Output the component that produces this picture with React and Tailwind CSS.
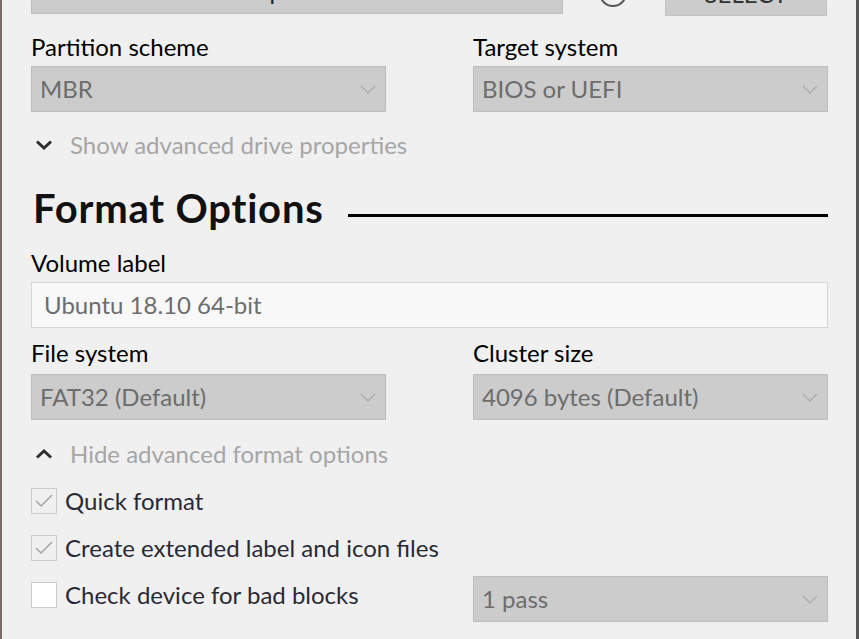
import React from 'react';

const font = { fontFamily: 'Lato, "Noto Sans", sans-serif' };

function ThinChevron() {
    return (
        <svg width="16" height="9" viewBox="0 0 16 9" className="shrink-0">
            <polyline points="1,1 8,8 15,1" fill="none" stroke="#a9a9a9" strokeWidth="1.2" />
        </svg>
    );
}

function Combo({ value, className = '' }) {
    return (
        <div className={`flex h-[46px] items-center justify-between border border-[#bdbdbd] bg-[#cccccc] pl-[8px] pr-[9px] ${className}`}>
            <span className="text-[24px] leading-[30px] text-[#6d6d6d]">{value}</span>
            <ThinChevron />
        </div>
    );
}

function Label({ children }) {
    return <div className="h-[30px] text-[24px] leading-[30px] text-black">{children}</div>;
}

function Toggle({ up, children }) {
    return (
        <div className="flex h-[30px] items-center">
            <svg width="18" height="10" viewBox="0 0 18 10" className="ml-[4px] mr-[17px]">
                {up ? (
                    <polyline points="2,8.5 9,2 16,8.5" fill="none" stroke="#2e2e2e" strokeWidth="3" />
                ) : (
                    <polyline points="2,1.5 9,8 16,1.5" fill="none" stroke="#2e2e2e" strokeWidth="3" />
                )}
            </svg>
            <span className="text-[24px] leading-[30px] text-[#a6a6a6]">{children}</span>
        </div>
    );
}

function Check({ checked, children }) {
    return (
        <div className="flex h-[47px] items-center">
            <div className={`flex h-[26px] w-[26px] items-center justify-center border border-[#cdcdcd] ${checked ? 'bg-[#f0f0f0]' : 'bg-white'}`}>
                {checked && (
                    <svg width="20" height="16" viewBox="0 0 20 16">
                        <polyline points="2,8 7,13 18,2" fill="none" stroke="#a3a3a3" strokeWidth="1.5" />
                    </svg>
                )}
            </div>
            <span className="ml-[8px] text-[24px] leading-[30px] text-[#2a2a35]">{children}</span>
        </div>
    );
}

export default function App() {
    return (
        <div
            className="h-[639px] w-[859px] overflow-hidden border-l-2 border-r-[3px] border-l-[#7a6b63] border-r-[#555555] bg-[#f0f0f0] pl-[29px] pr-[28px]"
            style={font}
        >
            {/* boot selection row, mostly scrolled off */}
            <div className="-mt-[31px] flex items-start">
                <div className="h-[45px] w-[532px] border border-[#bdbdbd] bg-[#cccccc] pl-[12px] pt-[6px]">
                    <span className="block text-[24px] leading-[30px] text-[#222]">ubuntu-18.10-desktop-amd64.iso</span>
                </div>
                <svg width="32" height="32" viewBox="0 0 32 32" className="ml-[34px] mt-[8px]">
                    <circle cx="16" cy="16" r="13" fill="none" stroke="#555" strokeWidth="2" />
                </svg>
                <div className="ml-[36px] flex h-[47px] w-[162px] justify-center border border-[#c2c2c2] bg-[#cccccc] pt-[9px]">
                    <span className="text-[24px] leading-[30px] text-[#333]">SELECT</span>
                </div>
            </div>

            <div className="mt-[16px] grid grid-cols-2 gap-x-[87px]">
                <div>
                    <Label>Partition scheme</Label>
                    <Combo value="MBR" className="mt-[4px]" />
                </div>
                <div>
                    <Label>Target system</Label>
                    <Combo value="BIOS or UEFI" className="mt-[4px]" />
                </div>
            </div>

            <div className="mt-[18px]">
                <Toggle>Show advanced drive properties</Toggle>
            </div>

            <div className="mt-[28px] flex items-start">
                <h1 className="h-[40px] pl-[2px] text-[40px] font-bold leading-[40px] tracking-[0.8px] text-[#111]">Format Options</h1>
                <div className="ml-[24px] mt-[26px] h-[3px] flex-1 bg-black" />
            </div>

            <div className="mt-[20px]">
                <Label>Volume label</Label>
                <div className="mt-[4px] flex h-[46px] items-center border border-[#d6d6d6] bg-[#f8f8f8] pl-[12px]">
                    <span className="text-[24px] leading-[30px] text-[#6d6d6d]">Ubuntu 18.10 64-bit</span>
                </div>
            </div>

            <div className="mt-[10px] grid grid-cols-2 gap-x-[87px]">
                <div>
                    <Label>File system</Label>
                    <Combo value="FAT32 (Default)" className="mt-[6px]" />
                </div>
                <div>
                    <Label>Cluster size</Label>
                    <Combo value="4096 bytes (Default)" className="mt-[6px]" />
                </div>
            </div>

            <div className="mt-[19px]">
                <Toggle up>Hide advanced format options</Toggle>
            </div>

            <div className="mt-[8px]">
                <Check checked>Quick format</Check>
                <Check checked>Create extended label and icon files</Check>
                <div className="grid grid-cols-2 gap-x-[87px]">
                    <Check>Check device for bad blocks</Check>
                    <Combo value="1 pass" className="mt-[5px]" />
                </div>
            </div>
        </div>
    );
}
